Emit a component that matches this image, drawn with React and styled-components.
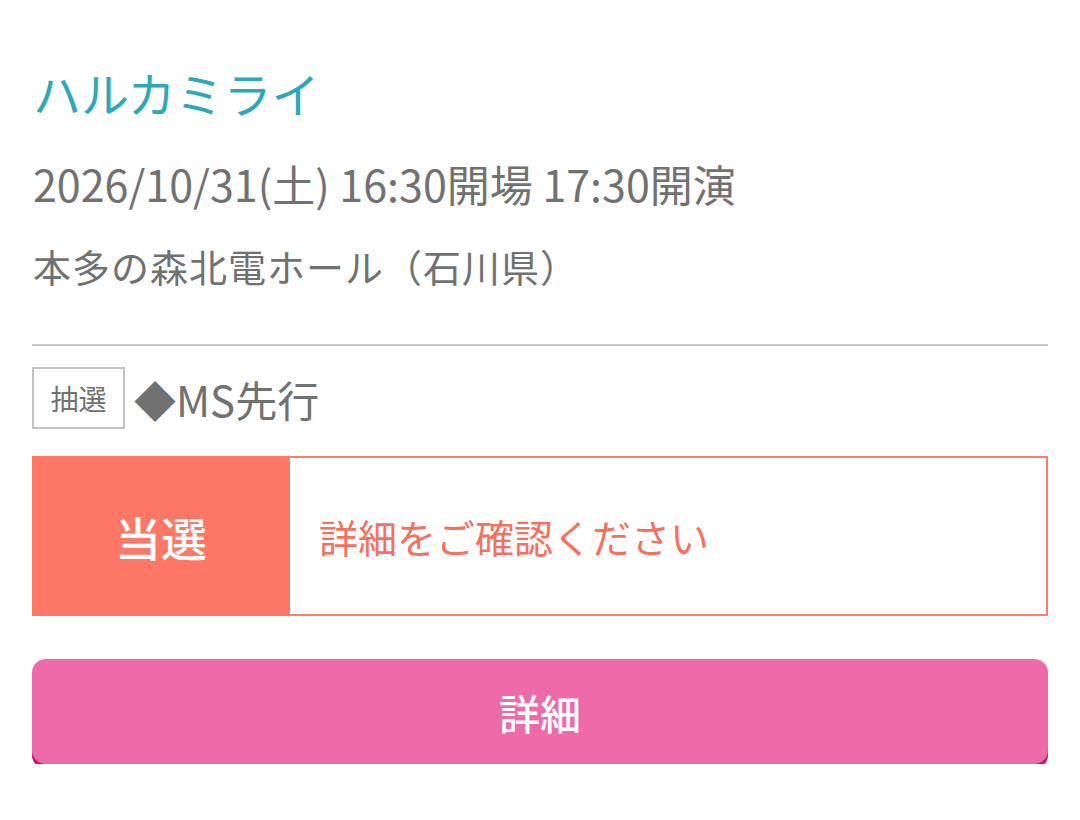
import React from "react";
import styled, { createGlobalStyle } from "styled-components";

const Global = createGlobalStyle`
  html, body { margin: 0; padding: 0; background: #fff; }
  body { font-family: "Noto Sans CJK JP", "Noto Sans", sans-serif; }
`;

const Page = styled.div`
  padding: 62px 32px 0 32px;
  width: 1016px;
`;

const Title = styled.h1`
  margin: 0;
  font-size: 48px;
  line-height: 60px;
  font-weight: 400;
  color: #2ea8b6;
  padding-left: 1px;
`;

const InfoLine = styled.p`
  margin: ${(p) => p.$mt}px 0 0 0;
  font-size: ${(p) => p.$size}px;
  letter-spacing: ${(p) => p.$ls || 0}px;
  line-height: 50px;
  color: #717171;
  padding-left: 1px;
`;

const Divider = styled.hr`
  margin: 53px 0 0 0;
  border: none;
  height: 2px;
  background: #c8c8c8;
`;

const SaleRow = styled.div`
  display: flex;
  align-items: center;
  gap: 9px;
  margin-top: 21px;
`;

const Tag = styled.span`
  box-sizing: border-box;
  display: flex;
  align-items: center;
  justify-content: center;
  width: 93px;
  height: 62px;
  border: 2px solid #c2c2c2;
  font-size: 28px;
  color: #717171;
`;

const SaleName = styled.span`
  font-size: 42px;
  color: #717171;
`;

const Status = styled.div`
  box-sizing: border-box;
  display: flex;
  margin-top: 27px;
  height: 160px;
  border: 2px solid #f77f6c;
`;

const StatusLabel = styled.div`
  display: flex;
  align-items: center;
  justify-content: center;
  width: 258px;
  margin: -2px 0 -2px -2px;
  background: #fe7865;
  color: #fff;
  font-size: 46px;
  font-weight: 500;
`;

const StatusText = styled.div`
  display: flex;
  align-items: center;
  padding-left: 29px;
  color: #f7705e;
  font-size: 39px;
`;

const DetailButton = styled.button`
  display: flex;
  align-items: center;
  justify-content: center;
  width: 100%;
  height: 105px;
  margin-top: 43px;
  border: none;
  border-radius: 14px;
  background: #ef6aa8;
  box-shadow: 0 5px 0 #c4196c;
  color: #fff;
  font-family: "Noto Sans CJK JP", "Noto Sans", sans-serif;
  font-size: 41px;
  font-weight: 500;
  cursor: pointer;
`;

export default function App() {
  return (
    <>
      <Global />
      <Page>
        <Title>ハルカミライ</Title>
        <InfoLine $mt={36} $size={43}>2026/10/31(土) 16:30開場 17:30開演</InfoLine>
        <InfoLine $mt={33} $size={38} $ls={1}>本多の森北電ホール（石川県）</InfoLine>
        <Divider />
        <SaleRow>
          <Tag>抽選</Tag>
          <SaleName>◆MS先行</SaleName>
        </SaleRow>
        <Status>
          <StatusLabel>当選</StatusLabel>
          <StatusText>詳細をご確認ください</StatusText>
        </Status>
        <DetailButton>詳細</DetailButton>
      </Page>
    </>
  );
}
